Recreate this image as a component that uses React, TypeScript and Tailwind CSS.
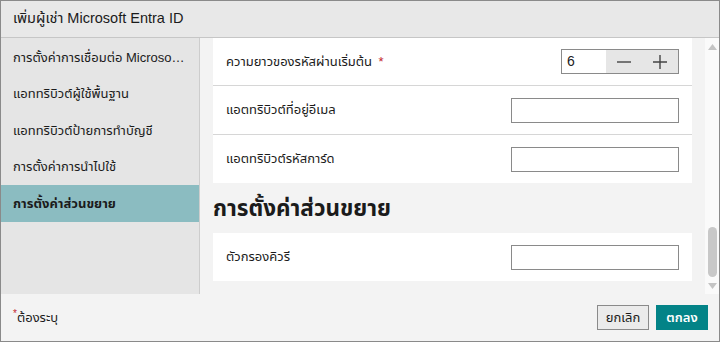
const font = { fontFamily: '"Segoe UI", Tahoma, "Liberation Sans", "Noto Sans Thai", sans-serif' }

const navItems = [
  'การตั้งค่าการเชื่อมต่อ Microsoft Entra ID',
  'แอททริบิวต์ผู้ใช้พื้นฐาน',
  'แอททริบิวต์ป้ายการทำบัญชี',
  'การตั้งค่าการนำไปใช้',
  'การตั้งค่าส่วนขยาย',
]

const TextBox = () => <div className="w-[168px] h-[25px] border border-[#8a8a8a] bg-white" />

const Row = ({ label, children, top }: { label: React.ReactNode; children: React.ReactNode; top?: boolean }) => (
  <div className={`flex items-center justify-between pl-[13px] pr-[13px] h-[48px] ${top ? 'border-t border-[#d6d6d6] h-[49px]' : ''}`}>
    <span className="text-[13px] text-[#1b1b1b]">{label}</span>
    {children}
  </div>
)

const App = () => {
  return (
    <div className="w-[720px] h-[342px] border border-[#8a8a8a] flex flex-col bg-[#f3f3f3] overflow-hidden" style={font}>
      <header className="h-[37px] shrink-0 bg-[#e8e8e8] border-b border-[#c6c6c6] flex items-center pl-[12px]">
        <h1 className="text-[14.5px] text-[#1b1b1b]">เพิ่มผู้เช่า Microsoft Entra ID</h1>
      </header>

      <div className="flex h-[256px] shrink-0">
        <nav className="w-[199px] shrink-0 bg-[#e5e5e5] border-r border-[#cdcdcd] pt-[1px]">
          {navItems.map((item, i) => (
            <div
              key={item}
              className={`h-[36.5px] flex items-center pl-[12px] pr-[12px] text-[13px] text-[#1b1b1b] ${i === 4 ? 'bg-[#8bbcc1] font-bold' : ''}`}
            >
              <span className="truncate">{item}</span>
            </div>
          ))}
        </nav>

        <main className="w-[505px] shrink-0 px-[13px] pb-[12px] flex flex-col">
          <section className="bg-white">
            <div className="flex items-center justify-between px-[13px] h-[47px]">
              <span className="text-[13px] text-[#1b1b1b]">
                ความยาวของรหัสผ่านเริ่มต้น <span className="text-[#c4262e] ml-[3px]">*</span>
              </span>
              <div className="w-[118px] h-[25px] border border-[#8a8a8a] flex">
                <div className="w-[44px] flex items-center pl-[5px] text-[14px] text-[#1b1b1b]">6</div>
                <div className="flex-1 bg-[#e6e6e6] flex items-center justify-around text-[#444]">
                  <svg width="16" height="16" viewBox="0 0 16 16"><path d="M1 8h14" stroke="#444" strokeWidth="1.4" /></svg>
                  <svg width="16" height="16" viewBox="0 0 16 16"><path d="M1 8h14M8 1v14" stroke="#444" strokeWidth="1.4" /></svg>
                </div>
              </div>
            </div>
            <Row label="แอตทริบิวต์ที่อยู่อีเมล" top>
              <TextBox />
            </Row>
            <Row label="แอตทริบิวต์รหัสการ์ด" top>
              <TextBox />
            </Row>
          </section>

          <h2 className="h-[50px] flex items-center text-[22.5px] font-bold text-[#1b1b1b] pt-[1px]">การตั้งค่าส่วนขยาย</h2>

          <section className="bg-white">
            <Row label="ตัวกรองคิวรี">
              <TextBox />
            </Row>
          </section>
        </main>

        <div className="w-[14px] shrink-0 bg-[#fafafa] flex flex-col items-center">
          <svg className="mt-[6px]" width="9" height="6" viewBox="0 0 9 6"><path d="M4.5 0L9 6H0z" fill="#c4c4c4" /></svg>
          <div className="mt-[177px] w-[9px] h-[50px] rounded-[5px] bg-[#c8c8c8]" />
          <svg className="mt-[6px]" width="9" height="6" viewBox="0 0 9 6"><path d="M0 0h9L4.5 6z" fill="#c4c4c4" /></svg>
        </div>
      </div>

      <footer className="flex-1 flex items-center justify-between pl-[12px] pr-[11px]">
        <span className="text-[13px] text-[#1b1b1b]">
          <sup className="text-[#c4262e] text-[10px]">*</sup>ต้องระบุ
        </span>
        <div className="flex gap-[7px]">
          <button className="w-[52px] h-[25px] border border-[#8a8a8a] bg-[#ebebeb] text-[13px] text-[#1b1b1b]">ยกเลิก</button>
          <button className="w-[52px] h-[25px] bg-[#038387] text-[13px] text-white font-semibold">ตกลง</button>
        </div>
      </footer>
    </div>
  )
}

export default App
